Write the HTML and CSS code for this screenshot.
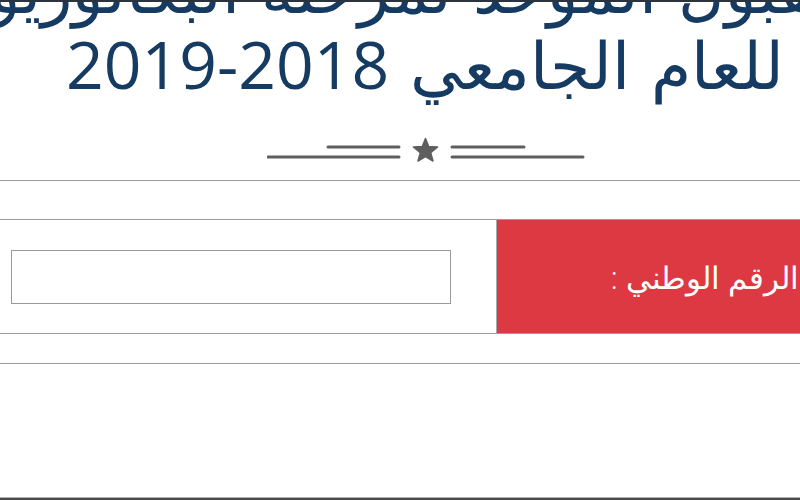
FILE: index.html
```html
<!DOCTYPE html>
<html lang="ar">
<head>
  <meta charset="UTF-8">
  <meta name="viewport" content="width=device-width, initial-scale=1.0">
  <title>القبول الموحد</title>
  <link rel="stylesheet" href="styles.css">
</head>
<body>
  <div class="topbar"></div>
  <div class="page" dir="rtl">
    <h1 class="title">القبول الموحد لمرحلة البكالوريوس<br>للعام الجامعي <span class="year">2018-2019</span></h1>

    <!-- ornament under the heading -->
    <svg class="divider" width="318" height="26" viewBox="0 0 318 26">
      <g stroke="#5f5f5f" stroke-width="3" stroke-linecap="round">
        <line x1="61" y1="10" x2="132" y2="10"/>
        <line x1="1" y1="20" x2="132" y2="20"/>
        <line x1="185" y1="10" x2="257" y2="10"/>
        <line x1="185" y1="20" x2="316" y2="20"/>
      </g>
      <polygon fill="#5f5f5f" stroke="#5f5f5f" stroke-width="1.5" stroke-linejoin="round"
        points="158.5,1.5 161.7,9.6 170.6,10 163.7,15.7 166,24 158.5,19.5 151,24 153.3,15.7 146.4,10 155.3,9.6"/>
    </svg>

    <hr class="rule">

    <form class="search" onsubmit="return false">
      <label class="search-label" for="nationalId">الرقم الوطني :</label>
      <div class="search-field">
        <input type="text" id="nationalId" class="search-input">
      </div>
    </form>

    <hr class="rule rule-low">
  </div>
  <div class="footer"></div>
</body>
</html>
```

FILE: styles.css
```css
html, body {
  margin: 0;
  height: 100%;
  overflow: hidden;
}

body {
  font-family: 'Open Sans', 'DejaVu Sans', sans-serif;
  background: #fff;
  display: flex;
  flex-direction: column;
}

.topbar {
  position: fixed;
  top: 0;
  left: 0;
  right: 0;
  height: 2px;
  background: #2b333e;
  z-index: 2;
}

.page {
  width: 850px;
  align-self: flex-start;
}

.title {
  margin: -49px 0 0;
  font-size: 65px;
  line-height: 75px;
  font-weight: 300;
  word-spacing: 4px;
  color: #163b62;
  text-align: center;
  white-space: nowrap;
}

.year {
  font-size: 66px;
  font-weight: 400;
  letter-spacing: 6px;
}

.divider {
  display: block;
  margin: 35px 265px 0 auto;
}

.rule {
  border: 0;
  border-top: 1px solid #9c9c9c;
  margin: 17px 0 0;
}

.search {
  display: flex;
  margin-top: 38px;
  border-top: 1px solid #9c9c9c;
  border-bottom: 1px solid #9c9c9c;
  height: 113px;
}

.search-label {
  width: 302px;
  padding-right: 51px;
  background: #dd3943;
  border-left: 1px solid #a8a8a8;
  color: #fff;
  font-size: 31px;
  font-weight: 300;
  display: flex;
  align-items: center;
}

.search-field {
  flex: 1;
  display: flex;
  align-items: center;
  padding-left: 11px;
}

.search-input {
  width: 440px;
  height: 54px;
  box-sizing: border-box;
  margin-right: auto;
  border: 1px solid #9a9a9a;
  font-size: 18px;
  padding: 0 10px;
}

.rule-low {
  margin-top: 29px;
}

.footer {
  margin-top: auto;
  height: 2px;
  border-top: 1px solid #b0b0b0;
  background: #4a4a4a;
}
```
